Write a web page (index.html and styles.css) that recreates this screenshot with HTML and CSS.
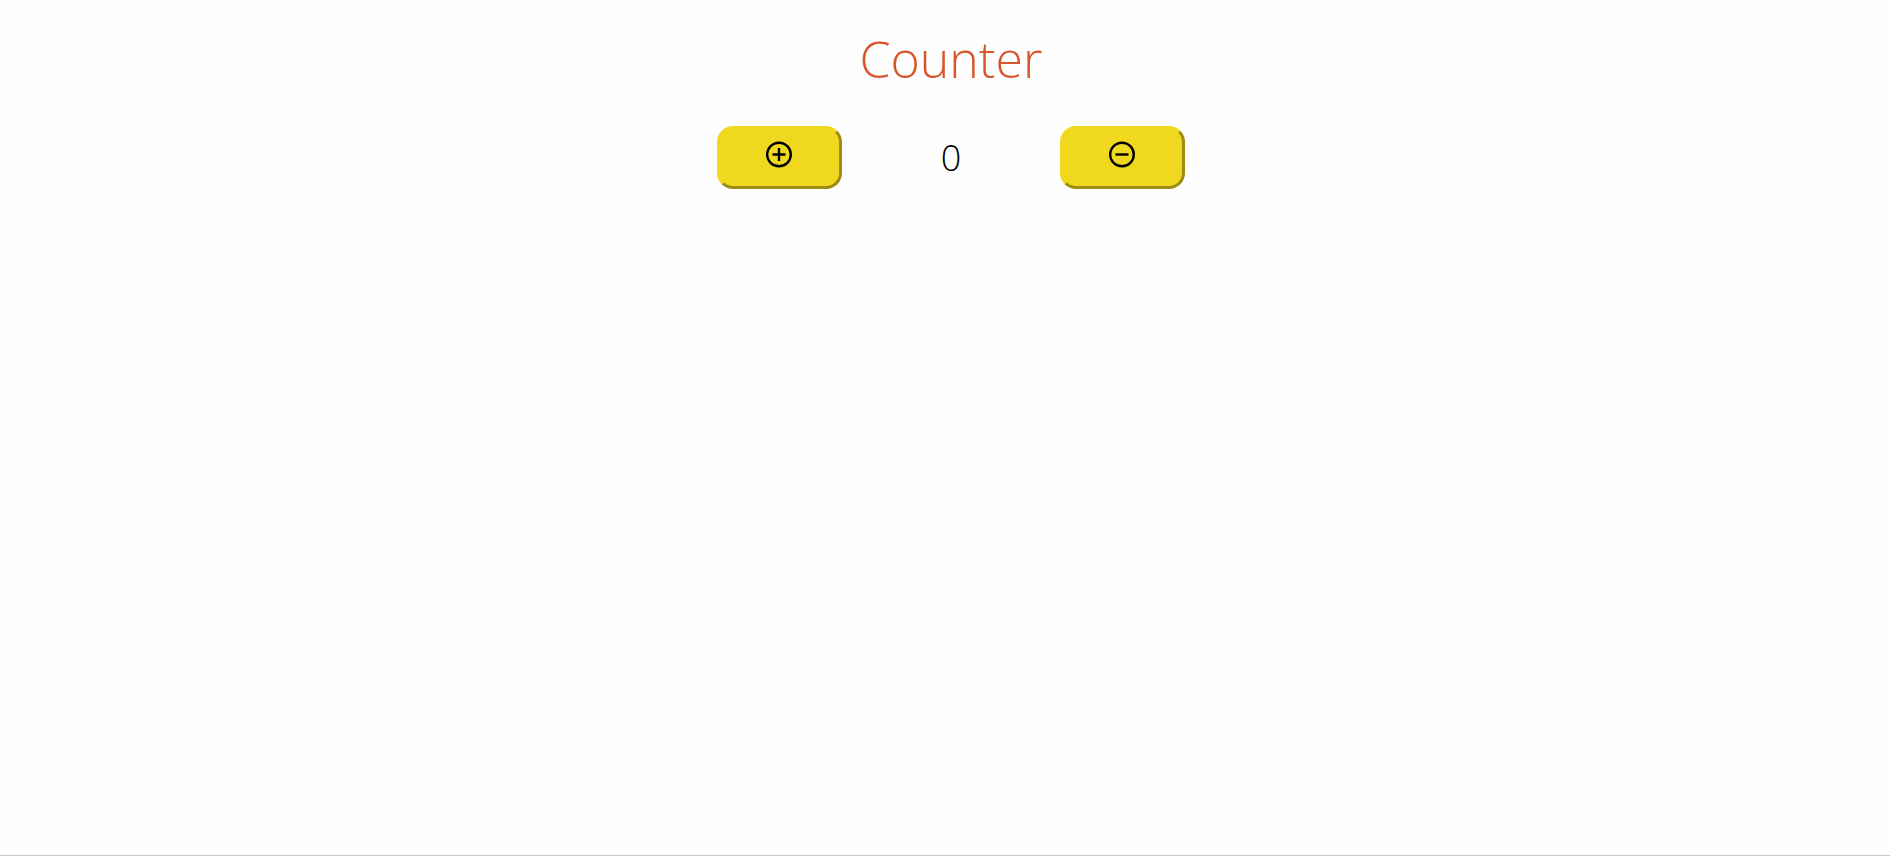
FILE: index.html
```html
<!DOCTYPE html>
<html lang="en">
<head>
<meta charset="utf-8">
<title>Counter</title>
<link rel="stylesheet" href="styles.css">
</head>
<body>
<main class="page">
  <h1 class="title">Counter</h1>
  <div class="counter">
    <button class="button" type="button" aria-label="Increase">
      <svg class="icon" viewBox="0 0 26 26" aria-hidden="true"><circle cx="13" cy="12.5" r="11.8"/><path d="M6.5 12.5h13M13 6v13"/></svg>
    </button>
    <output class="value">0</output>
    <button class="button" type="button" aria-label="Decrease">
      <svg class="icon" viewBox="0 0 26 26" aria-hidden="true"><circle cx="13" cy="12.5" r="11.8"/><path d="M6.5 12.5h13"/></svg>
    </button>
  </div>
</main>
</body>
</html>
```
FILE: styles.css
```css
* {
  box-sizing: border-box;
}

body {
  margin: 0;
  background: #fefefe;
  font-family: "Open Sans", sans-serif;
  font-weight: 300;
}

.page {
  display: flex;
  flex-direction: column;
  align-items: center;
  min-height: 100vh;
  padding: 24px 0 0 12px;
  border-bottom: 1px solid #c8c8c8;
}

.title {
  margin: 0 0 32px;
  color: #d8552b;
  font-size: 50px;
  font-weight: 300;
  line-height: 70px;
}

.counter {
  display: flex;
  align-items: center;
}

.button {
  width: 125px;
  height: 63px;
  padding: 0 1px 6px 0;
  border: 3px outset #efd81d;
  border-radius: 16px;
  background: #efd81d;
}

.icon {
  display: block;
  width: 26px;
  height: 26px;
  margin: 0 auto;
  overflow: visible;
  fill: none;
  stroke: #000;
  stroke-width: 2.4;
}

.value {
  width: 218px;
  font-size: 36px;
  line-height: 52px;
  text-align: center;
}
```
